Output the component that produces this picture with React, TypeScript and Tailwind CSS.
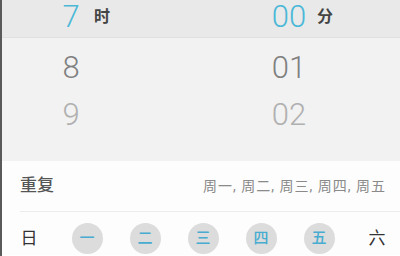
const days = [
  { label: "日", on: false },
  { label: "一", on: true },
  { label: "二", on: true },
  { label: "三", on: true },
  { label: "四", on: true },
  { label: "五", on: true },
  { label: "六", on: false },
];

function PickerRow({ hour, minute, tone }: { hour: string; minute: string; tone: string }) {
  return (
    <div className={`flex h-[47px] items-center ${tone}`}>
      <div className="w-[198px] pl-[58px]">
        <span className="inline-block w-[22px] text-center">{hour}</span>
      </div>
      <div className="pl-[71px]">
        <span className="inline-block w-[36px] text-center">{minute}</span>
      </div>
    </div>
  );
}

export default function App() {
  return (
    <div
      className="h-[256px] w-[400px] overflow-hidden border-l-2 border-[#5a5a5a] bg-white"
      style={{ fontFamily: "Roboto, 'Noto Sans CJK SC', sans-serif" }}
    >
      {/* time picker */}
      <div className="h-[161px] bg-[#f2f2f2]">
        <div className="flex h-[38px] items-center border-b border-[#e0e0e0] bg-[#e9e9e9] pb-[3px]">
          <div className="flex w-[198px] items-center pl-[58px]">
            <span className="inline-block w-[22px] text-center text-[31px] font-light leading-[30px] text-[#4bb8d8]">
              7
            </span>
            <span className="ml-[12px] text-[16px] font-bold text-[#444]">时</span>
          </div>
          <div className="flex items-center pl-[71px]">
            <span className="inline-block w-[36px] text-center text-[31px] font-light leading-[30px] text-[#4bb8d8]">
              00
            </span>
            <span className="ml-[10px] text-[16px] font-bold text-[#444]">分</span>
          </div>
        </div>
        <div className="pt-[6px] text-[31px] font-light leading-none">
          <PickerRow hour="8" minute="01" tone="text-[#808080]" />
          <PickerRow hour="9" minute="02" tone="text-[#b0b0b0]" />
        </div>
      </div>

      {/* repeat */}
      <div className="bg-[#fdfdfd]">
        <div className="ml-[18px] flex h-[51px] items-center justify-between border-b border-[#ececec] pr-[14px]">
          <span className="text-[17px] font-medium text-[#555]">重复</span>
          <span className="text-[14px] tracking-[1px] text-[#8a8a8a]">周一, 周二, 周三, 周四, 周五</span>
        </div>
        <div className="-ml-[2px] flex h-[43px] items-center pt-[10px]">
          {days.map((d) => (
            <div key={d.label} className="flex w-[58px] shrink-0 justify-center">
              {d.on ? (
                <span className="flex h-[31px] w-[31px] items-center justify-center rounded-full bg-[#dcdcdc] text-[15px] font-medium text-[#48acd0]">
                  {d.label}
                </span>
              ) : (
                <span className="text-[17px] text-[#333]">{d.label}</span>
              )}
            </div>
          ))}
        </div>
      </div>
    </div>
  );
}
